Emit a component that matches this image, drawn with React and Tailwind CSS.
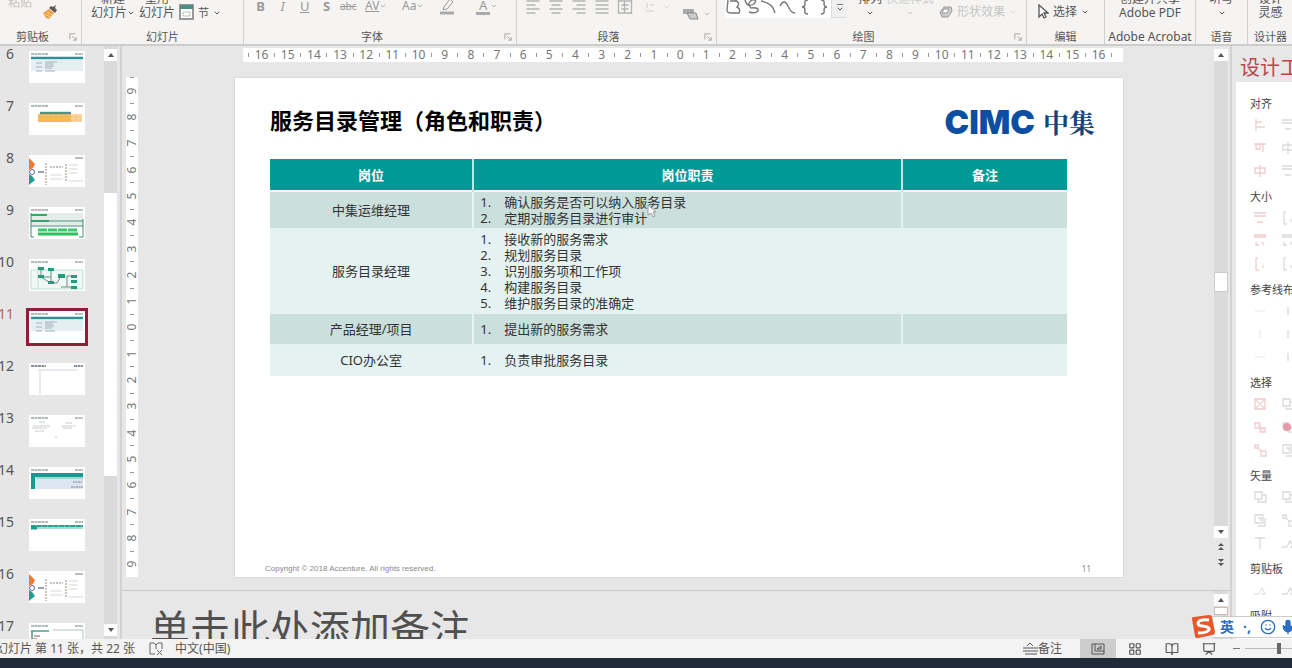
import React from "react";
import { BookOpen, ChevronDown, Mic, Presentation, Smile, LayoutGrid } from "lucide-react";

/* ---------- Ribbon ---------- */

function Group({ label, labelSize = "text-[11px]", className, launcher, children }) {
  return (
    <section className={`flex h-[44px] flex-col justify-end border-r border-[#cfcfcf] ${className}`}>
      <div className="flex h-5 items-end">{children}</div>
      <div className="mt-[10px] flex h-[14px] items-center">
        <h2 className={`flex-1 text-center leading-[14px] whitespace-nowrap text-[#555] ${labelSize}`}>{label}</h2>
        {launcher && (
          <button aria-label={`${label} 选项`} className="flex w-4 justify-center text-[#999]">
            <svg viewBox="0 0 10 10" className="size-2" fill="none" stroke="currentColor">
              <path d="M1 8V1h7M4 4l5 5M9 5v4H5" />
            </svg>
          </button>
        )}
      </div>
    </section>
  );
}

function Stack({ top, bottom, arrow, className = "" }) {
  return (
    <button className={`flex flex-col items-center text-[12px] leading-[14px] whitespace-nowrap ${className}`}>
      <span>{top}</span>
      <span className="flex h-[14px] items-center">
        {bottom}
        {arrow && <ChevronDown className="size-2" strokeWidth={3} />}
      </span>
    </button>
  );
}

const ALIGNMENTS = [
  { name: "左对齐", d: "M1 2h13M1 6h9M1 10h13M1 14h9" },
  { name: "居中", d: "M1 2h13M3 6h9M1 10h13M3 14h9" },
  { name: "右对齐", d: "M1 2h13M5 6h9M1 10h13M5 14h9" },
  { name: "两端对齐", d: "M1 2h13M1 6h13M1 10h13M1 14h13" },
  { name: "分散对齐", d: "M1 1v14M14 1v14M1 2h13M4 6h7M4 10h7M1 14h13M7 2v12" },
];

function Ribbon() {
  return (
    <header className="flex h-[46px] shrink-0 overflow-hidden border-b-2 border-[#cdcdcb] bg-[#f5f4f2] text-[#555]">
      <Group label="剪贴板" launcher className="w-[82px] shrink-0">
        <button className="ml-2 self-start text-[12px] leading-[6px] text-[#c8c4c0]">粘贴</button>
        <button aria-label="格式刷" className="ml-[10px]">
          <svg viewBox="0 0 16 16" className="size-4">
            <path d="M1 9l6-4 5 4-5 6-3-1z" fill="#eea045" />
            <path d="M3 10l5 3M5 8l5 3" stroke="#fbd9a2" />
            <path d="M7 4l6 5 2-3-2-2 1-3-3 2-2-1z" fill="#5c5a58" />
          </svg>
        </button>
      </Group>
      <Group label="幻灯片" className="w-[162px] shrink-0">
        <Stack top="新建" bottom="幻灯片" arrow className="ml-[9px]" />
        <Stack top="重用" bottom="幻灯片" className="ml-1" />
        <button aria-label="版式" className="ml-1">
          <svg viewBox="0 0 15 16" className="h-4 w-[15px]">
            <path d="M1 1h13v14H1z" fill="#fff" stroke="#999" strokeWidth="2" />
            <path d="M1 1h13v4H1z" fill="#4b8f84" />
            <path d="M4 8h7v4H4z" fill="none" stroke="#bbb" />
          </svg>
        </button>
        <button className="ml-1 flex h-[14px] items-center gap-1 text-[11px]">
          节<ChevronDown className="size-2" strokeWidth={3} />
        </button>
      </Group>
      <Group label="字体" launcher className="w-[273px] shrink-0">
        <div className="ml-3 flex items-center gap-[13px] pb-[5px] text-[13px] leading-[18px] text-[#999]">
          <button className="w-[9px] font-bold">B</button>
          <button className="w-[9px] italic">I</button>
          <button className="w-[9px] underline">U</button>
          <button className="w-[9px] font-bold">S</button>
          <button className="-ml-1 w-4 text-[10px] line-through">abc</button>
          <button className="-ml-1 flex w-6 items-center text-[12px] underline">AV<ChevronDown className="size-2 shrink-0" /></button>
          <button className="flex w-6 items-center text-[12px]">Aa<ChevronDown className="size-2 shrink-0" /></button>
          <button aria-label="突出显示" className="w-6">
            <svg viewBox="0 0 16 18" className="h-[18px] w-4" fill="none" stroke="#999">
              <path d="M5 10l6-8 3 3-6 7-4 1z" />
              <path d="M1 16h14" stroke="#aaa" strokeWidth="3" />
            </svg>
          </button>
          <button aria-label="字体颜色" className="flex w-6 items-center">
            <span className="border-b-3 border-[#aaa] px-[3px] leading-[14px]">A</span>
            <ChevronDown className="size-2" />
          </button>
        </div>
      </Group>
      <Group label="段落" launcher className="w-[200px] shrink-0">
        <div className="ml-2 flex items-center gap-[7px] pb-[5px]">
          {ALIGNMENTS.map((a) => (
            <button key={a.name} aria-label={a.name}>
              <svg viewBox="0 0 15 16" className="size-4" fill="none" stroke="#b4b4b4" strokeWidth="1.3">
                <path d={a.d} />
              </svg>
            </button>
          ))}
          <button aria-label="行距" className="ml-[5px] flex items-center gap-2 text-[#ccc]">
            <svg viewBox="0 0 10 10" className="size-[10px]" fill="none" stroke="currentColor">
              <path d="M2 1v5M5 3h4M1 9h8" />
            </svg>
            <ChevronDown className="size-2" />
          </button>
        </div>
        <button aria-label="转换为 SmartArt" className="ml-3 flex items-center gap-1 text-[#999]">
          <svg viewBox="0 0 16 12" className="h-3 w-4">
            <path d="M0 1h11v5H0z" fill="#aaa" />
            <path d="M4 5h9l2 6H7z" fill="#ccc" stroke="#888" />
          </svg>
          <ChevronDown className="size-2" />
        </button>
      </Group>
      <Group label="绘图" launcher className="min-w-[310px] flex-1">
        <button aria-label="形状" className="mb-[2px] ml-2 flex h-[18px] w-[122px] items-center bg-white">
          <svg viewBox="0 0 106 18" className="h-[18px] w-[106px]" fill="none" stroke="#777" strokeWidth="1.4">
            <path d="M3 0l-1 10q0 3 4 3h8q2-4-2-6 4-4-2-7M5 1h7" />
            <path d="M20 0q2 8 9 4 4-5-2-4-6 4-1 8 8-1 7 3-3 3-9 1" />
            <path d="M36 1q12 2 14 12M55 6q4-8 8 0 3 7 7 7M83 0q-4 0-3 4 0 3-3 3 3 0 3 3-1 4 3 4M96 0q4 0 3 4 0 3 3 3-3 0-3 3 1 4-3 4" />
          </svg>
          <span className="flex h-[18px] flex-1 flex-col items-center justify-center border-b border-l border-[#ddd] bg-[#f0f0f0]">
            <span className="h-px w-[6px] bg-[#777]" />
            <ChevronDown className="size-2" strokeWidth={3} />
          </span>
        </button>
        <Stack top="排列" arrow className="ml-[11px]" />
        <Stack top="快速样式" arrow className="ml-1 text-[#ccc]" />
        <button className="ml-[5px] flex items-center gap-1 text-[12px] leading-4 whitespace-nowrap text-[#c4c4c4]">
          <svg viewBox="0 0 14 12" className="h-3 w-[14px]">
            <path d="M5 1h7l1 4-4 6H3L1 6z" fill="#ccc" stroke="#999" />
            <path d="M5 3h5l-2 4H3z" fill="#fff" stroke="#999" />
          </svg>
          形状效果<ChevronDown className="size-2" />
        </button>
      </Group>
      <Group label="编辑" className="w-[78px] shrink-0">
        <button className="ml-[10px] flex items-center gap-1 text-[12px] leading-4 whitespace-nowrap">
          <svg viewBox="0 0 12 16" className="h-4 w-3" fill="#fff" stroke="#555" strokeWidth="1.3">
            <path d="M2 1v12l3-3 2 4 2-1-2-4h4z" />
          </svg>
          选择<ChevronDown className="size-2" strokeWidth={3} />
        </button>
      </Group>
      <Group label="Adobe Acrobat" labelSize="text-[12px]" className="w-[91px] shrink-0">
        <Stack top="创建并共享" bottom="Adobe PDF" className="flex-1" />
      </Group>
      <Group label="语音" className="w-[52px] shrink-0">
        <Stack top="听写" arrow className="flex-1" />
      </Group>
      <Group label="设计器" className="w-[45px] shrink-0 border-r-0">
        <Stack top="设计" bottom="灵感" className="flex-1" />
      </Group>
    </header>
  );
}

/* ---------- Slide thumbnails ---------- */

const MARKS = <path d="M2 3h17M46 3h8" stroke="#9aa4a4" strokeWidth="1.4" strokeDasharray="3 .5" />;

const ROWS_ART = (
  <g>
    {MARKS}
    <path d="M2 9h52v11H2z" fill="#e4eef3" />
    <path d="M2 7h52" stroke="#2f8f92" strokeWidth="2.6" />
    <path d="M7 12h6M16 11h12M16 13h8M7 16h6M16 15h9M16 17h7M7 20h6M16 20h10" stroke="#a3b0b9" />
  </g>
);

const FAN_ART = (
  <g>
    <path d="M46 3h8" stroke="#9aa4a4" strokeWidth="1.4" />
    <path d="M0 3l6 6-2 4-4 2z" fill="#ee7a2c" />
    <path d="M0 19l3 2 3 4-6 5z" fill="#1f9c8e" />
    <circle cx="3" cy="17" r="2.5" fill="#fff" stroke="#5d6aa5" />
    <path d="M9 17h6" stroke="#7d8a99" strokeWidth="1.6" />
    <path d="M17 8v22M37 9v18" stroke="#a08a7a" strokeDasharray="2 1" />
    <path d="M21 20h12M21 24h13M40 10h9M40 14h9M40 18h8M40 26h14" stroke="#d3dad8" />
    <path d="M21 12h13" stroke="#888" strokeDasharray="2 1" />
  </g>
);

const SLIDES = [
  { n: 6, art: ROWS_ART },
  {
    n: 7,
    art: (
      <g>
        {MARKS}
        <path d="M9 11h44v8H9z" fill="#fbbd5c" />
        <path d="M42 11h11v8H42z" fill="#fdd6a0" />
        <path d="M11 10h31" stroke="#3c9a86" strokeWidth="2.4" />
        <path d="M10 14h42M10 17h42" stroke="#e3a54a" strokeDasharray="4 1" strokeWidth=".6" />
      </g>
    ),
  },
  { n: 8, art: FAN_ART },
  {
    n: 9,
    art: (
      <g>
        {MARKS}
        <path d="M2 6h52v13H2z" fill="#e3ece9" />
        <path d="M2 8h16M2 14h18" stroke="#2fae63" strokeWidth="2" />
        <path d="M2 14h52M2 19h52" stroke="#4a8f80" />
        <path d="M9 23h39" stroke="#39c86b" strokeWidth="3" strokeDasharray="9 1" />
        <path d="M9 27h40" stroke="#2fbf5c" strokeWidth="3" />
        <path d="M2 6v24h3M54 12v18h-4" fill="none" stroke="#3f8d6a" />
      </g>
    ),
  },
  {
    n: 10,
    art: (
      <g>
        {MARKS}
        <path d="M2 11h52v19H2zM9 6v24" fill="#f0f8f5" stroke="#bfe0d5" />
        <path d="M12 9v9h10M22 9v15h6l4-7M38 28V17h6M32 28h14M12 18l8 5" fill="none" stroke="#6d8f86" />
        <path d="M9 8h6v3H9zM19 9h6v3h-6zM9 16h6v3H9zM19 22h6v3h-6zM29 15h7v4h-7zM42 16h6v3h-6zM42 21h6v3h-6zM42 27h6v3h-6z" fill="#259a7c" />
      </g>
    ),
  },
  { n: 11, art: ROWS_ART, selected: true },
  {
    n: 12,
    art: (
      <g>
        <path d="M2 3h15M45 3h9" stroke="#66707a" strokeWidth="1.6" strokeDasharray="3 .5" />
        <path d="M9 7h39M11 7v25" fill="none" stroke="#e6e9f2" strokeWidth="2" />
      </g>
    ),
  },
  {
    n: 13,
    art: (
      <g>
        {MARKS}
        <path d="M10 7h6M4 11h17M3 13h15M6 16h9M37 8h6M33 11h14M34 13h9M26 22h2" stroke="#c2c6c8" strokeDasharray="3 .5" />
      </g>
    ),
  },
  {
    n: 14,
    art: (
      <g>
        {MARKS}
        <path d="M2 6h52v16H2z" fill="#dde6ee" />
        <path d="M2 8h52M4 8v14" stroke="#179b90" strokeWidth="4" />
        <path d="M7 11h47" stroke="#9acfc8" strokeWidth="1.4" />
        <path d="M44 15h9M42 20h12" stroke="#7d8894" strokeDasharray="2 .5" />
      </g>
    ),
  },
  {
    n: 15,
    art: (
      <g>
        {MARKS}
        <path d="M2 6h52v4H2z" fill="#a9d8d3" />
        <path d="M2 7h52" stroke="#2a9d94" strokeWidth="2" strokeDasharray="5 .6" />
        <path d="M2 9h6" stroke="#179b90" strokeWidth="3" />
      </g>
    ),
  },
  { n: 16, art: FAN_ART },
  {
    n: 17,
    art: (
      <g>
        {MARKS}
        <path d="M2 8h18M3 8v20" fill="none" stroke="#4e9f8b" strokeWidth="1.6" />
        <path d="M5 13h6M3 16h5" stroke="#a0504c" />
        <path d="M24 7h30v20" fill="none" stroke="#b4c4c0" />
      </g>
    ),
  },
];

function ScrollButton({ down }) {
  return (
    <button aria-label={down ? "向下滚动" : "向上滚动"} className="flex h-3 w-full shrink-0 items-center justify-center bg-white">
      <svg viewBox="0 0 8 4" className="h-1 w-2" fill="#555">
        <path d={down ? "M1 0h6L4 4z" : "M1 4h6L4 0z"} />
      </svg>
    </button>
  );
}

function Thumbnails() {
  return (
    <aside className="flex w-[122px] shrink-0 overflow-hidden border-r-2 border-[#d2d2d2] bg-[#e7e6e7]">
      <ol className="flex-1 pt-[5px]">
        {SLIDES.map((s) => (
          <li key={s.n} className="flex h-[52px] items-start gap-3">
            <span className={`flex w-[14px] justify-end text-[14px] leading-[6px] ${s.selected ? "text-[#c0566a]" : "text-[#555]"}`}>{s.n}</span>
            <button
              aria-label={`幻灯片 ${s.n}`}
              className={`-mt-[3px] border-3 ${s.selected ? "border-[#8d1f38]" : "border-transparent"}`}
            >
              <svg viewBox="0 0 56 32" className="h-8 w-14 bg-white">{s.art}</svg>
            </button>
          </li>
        ))}
      </ol>
      <div className="mr-[3px] flex w-[13px] flex-col bg-[#dadada] py-[3px]">
        <ScrollButton />
        <div className="grow-[132]" />
        <div className="grow-[283] bg-white" />
        <div className="grow-[148]" />
        <ScrollButton down />
      </div>
    </aside>
  );
}

/* ---------- Rulers ---------- */

const range = (max) => Array.from({ length: max * 2 + 1 }, (_, i) => Math.abs(i - max));

function HorizontalRuler() {
  return (
    <div className="ml-2 flex h-[14px] items-center justify-between bg-white pr-[11px] pl-[5px] text-[12px] text-[#777]">
      {range(16).map((n, i) => (
        <React.Fragment key={i}>
          <span className="h-1 w-px bg-[#999]" />
          <span className="w-0 flex-1 text-center leading-[14px]">{n}</span>
        </React.Fragment>
      ))}
      <span className="h-1 w-px bg-[#999]" />
    </div>
  );
}

function VerticalRuler() {
  return (
    <div className="flex w-3 flex-1 flex-col items-center bg-white text-[12px] text-[#777]">
      {range(9).map((n, i) => (
        <React.Fragment key={i}>
          <span className="h-px w-1 bg-[#999]" />
          <span className="flex h-0 flex-1 items-center">
            <span className="-rotate-90 leading-3">{n}</span>
          </span>
        </React.Fragment>
      ))}
    </div>
  );
}

/* ---------- Slide ---------- */

const ROLES = [
  { role: "中集运维经理", height: "h-[37px]", duties: ["确认服务是否可以纳入服务目录", "定期对服务目录进行审计"], pointer: true },
  { role: "服务目录经理", height: "h-[86px]", duties: ["接收新的服务需求", "规划服务目录", "识别服务项和工作项", "构建服务目录", "维护服务目录的准确定"] },
  { role: "产品经理/项目", height: "h-[30px]", duties: ["提出新的服务需求"] },
  { role: "CIO办公室", height: "h-[32px]", duties: ["负责审批服务目录"] },
];

function Pointer() {
  return (
    <svg viewBox="0 0 10 14" className="absolute top-[-6px] left-full h-[14px] w-[10px]" fill="#fff" stroke="#999">
      <path d="M1 1v10l3-2 2 4 2-1-2-4h3z" />
    </svg>
  );
}

function Slide() {
  return (
    <article className="flex min-h-0 flex-1 flex-col bg-white pr-14 pl-[35px] shadow-[0_0_2px_#c4c4c4]">
      <div className="mt-6 -mr-7 flex h-10 items-center justify-between">
        <h1 className="pb-1 text-[22px] leading-9 font-bold text-black">服务目录管理（角色和职责）</h1>
        <div className="flex items-center gap-2 leading-10 text-[#0b4ea2]">
          <span className="font-['Inter'] text-[33px] font-black">CIMC</span>
          <span className="font-['Noto_Serif_CJK_SC','Noto_Sans_CJK_SC',serif] text-[26px] font-bold text-[#12447f]">中集</span>
        </div>
      </div>
      <table className="mt-[17px] w-full table-fixed border-collapse text-[13px] leading-4 text-[#333]">
        <colgroup>
          <col className="w-[25.5%]" />
          <col className="w-[53.8%]" />
          <col />
        </colgroup>
        <thead>
          <tr className="h-8 border-b-2 border-[#eef8f7] bg-[#009a96] text-white">
            <th className="border-r-2 border-[#bfe6e4]">岗位</th>
            <th className="border-r-2 border-[#bfe6e4]">岗位职责</th>
            <th>备注</th>
          </tr>
        </thead>
        <tbody>
          {ROLES.map((r, i) => (
            <tr key={r.role} className={`${r.height} ${i % 2 ? "bg-[#e5f2f2]" : "bg-[#cbdfdc]"}`}>
              <td className="border-r-2 border-[#e5f2f2] text-center">{r.role}</td>
              <td className="border-r-2 border-[#e5f2f2] pl-[6px]">
                <ol>
                  {r.duties.map((d, j) => (
                    <li key={d} className="flex">
                      <span className="w-6">{j + 1}.</span>
                      <span className="relative">{d}{r.pointer && j === 1 && <Pointer />}</span>
                    </li>
                  ))}
                </ol>
              </td>
              <td />
            </tr>
          ))}
        </tbody>
      </table>
      <footer className="mt-auto flex justify-between pb-[2px] text-[8px] leading-3 text-[#888]">
        <span className="-ml-[5px] font-['Liberation_Sans',sans-serif]">Copyright © 2018 Accenture. All rights reserved.</span>
        <span className="-mr-6">11</span>
      </footer>
    </article>
  );
}

function Editor() {
  return (
    <main className="flex min-w-0 flex-1 flex-col bg-[#e7e7e7]">
      <div className="flex min-h-0 flex-1">
        <div className="ml-1 flex w-3 flex-col pt-[31px] pb-[13px]">
          <VerticalRuler />
        </div>
        <div className="flex min-w-0 flex-1 flex-col pt-[2px] pr-[91px] pb-[13px] pl-[97px]">
          <HorizontalRuler />
          <div className="h-4" />
          <Slide />
        </div>
        <div className="mr-[2px] flex w-[14px] flex-col py-[3px]">
          <div className="flex flex-1 flex-col bg-[#dadada]">
            <ScrollButton />
            <div className="grow-[211]" />
            <div className="h-5 border border-[#ccc] bg-white" />
            <div className="grow-[234]" />
            <ScrollButton down />
          </div>
          <div className="flex h-[49px] flex-col items-center gap-[7px] pt-1 text-[#555]">
            <button aria-label="上一张幻灯片">
              <svg viewBox="0 0 8 9" className="h-[9px] w-2" fill="currentColor"><path d="M1 4h6L4 1zM1 8h6L4 5z" /></svg>
            </button>
            <button aria-label="下一张幻灯片">
              <svg viewBox="0 0 8 9" className="h-[9px] w-2" fill="currentColor"><path d="M1 1h6L4 4zM1 5h6L4 8z" /></svg>
            </button>
          </div>
        </div>
      </div>
      <div className="flex h-[49px] shrink-0 overflow-hidden border-t border-[#c8c8c8]">
        <textarea
          aria-label="备注"
          defaultValue="单击此处添加备注"
          className="mt-3 h-14 flex-1 resize-none overflow-hidden bg-transparent pl-7 text-[40px] leading-[52px] text-[#505050] outline-none"
        />
        <div className="mr-[2px] w-[14px] bg-[#dadada] pt-[3px]">
          <ScrollButton />
          <div className="mt-px h-2 border border-[#d8b9b5] bg-white" />
        </div>
      </div>
    </main>
  );
}

/* ---------- Design pane ---------- */

const PINK = "#f1cdd0";
const GREY = "#dadada";

const GLYPHS = {
  left: "M3 1v12M3 4h6M3 9h9",
  center: "M1 3h12M3 3v5h4V3M10 3v8",
  middle: "M7 1v12M2 4h10v5H2z",
  bars: "M1 2h12M1 5h12M4 11h6",
  width: "M1 1h12M1 3h12M3 8v3h3M9 8l2 3",
  height: "M3 1v12M3 1h2M3 13h3M10 8v3",
  line: "M2 7h10",
  vline: "M7 3v8",
  box: "M2 2h10v10H2zM2 2l10 10M12 2L2 12",
  dot: "M2 3h5v5H2zM7 8h5v4H7zM5 5l5 5",
  link: "M2 2h3v3H2zM5 5l4 4M8 8h5v5H8z",
  union: "M2 2h7v7H2zM5 9v3h8V5H9",
  frag: "M2 2h8v8H2zM5 5h3v3M12 5v8H5",
  text: "M2 2h10M7 2v11",
  clip: "M1 11h5M6 11l3-6 3 6H9",
};

const PANE = [
  { title: "对齐", color: PINK, rows: [["left", "bars"], ["center", "middle"], ["middle", "bars"]] },
  { title: "大小", color: PINK, rows: [["bars", "height"], ["width", "width"], ["height", "height"]] },
  { title: "参考线布局", color: "#ececec", rows: [["line", "vline"], ["vline", "vline"], ["line", "vline"]] },
  { title: "选择", color: PINK, rows: [["box", "union"], ["dot", "dot"], ["link", "frag"]] },
  { title: "矢量", color: GREY, rows: [["union", "union"], ["frag", "link"], ["text", "clip"]] },
  { title: "剪贴板", color: "#e4e4e4", rows: [["clip", "clip"]], short: true },
  { title: "吸附", color: GREY, rows: [] },
];

function DesignPane() {
  return (
    <aside className="flex w-[62px] shrink-0 flex-col overflow-hidden border-l-2 border-[#d2d2d2] bg-[#e7e7e7]">
      <h2 className="h-9 pt-[2px] pl-2 text-[20px] leading-10 whitespace-nowrap text-[#b7474a]">设计工具</h2>
      <div className="ml-1 h-0 flex-1 bg-white pt-[14px] pl-[14px]">
        {PANE.map((s) => (
          <section key={s.title} className={s.short ? "h-[47px]" : "h-[93px]"}>
            <h3 className="mb-px text-[11px] leading-4 whitespace-nowrap text-[#444]">{s.title}</h3>
            {s.rows.map((row, i) => (
              <div key={i} className="flex h-[23px] items-center gap-[14px] pl-[3px]">
                {row.map((g, j) => (
                  <button key={j} aria-label={`${s.title} ${i * 2 + j + 1}`} className="shrink-0">
                    <svg viewBox="0 0 14 14" className="size-[14px]" fill="none" stroke={j ? GREY : s.color} strokeWidth="1.3">
                      <path d={GLYPHS[g]} />
                      {s.title === "选择" && i === 1 && j === 1 && <circle cx="6" cy="7" r="4" fill="#e79aa5" stroke="none" />}
                    </svg>
                  </button>
                ))}
              </div>
            ))}
          </section>
        ))}
      </div>
    </aside>
  );
}

/* ---------- Status bar and input method ---------- */

function StatusBar() {
  return (
    <footer className="flex h-[19px] shrink-0 items-center overflow-hidden bg-[#f3f3f3] text-[12px] leading-[19px] whitespace-nowrap text-[#555]">
      <span className="-ml-1">幻灯片 第 11 张，共 22 张</span>
      <button aria-label="拼写检查" className="ml-[14px]">
        <svg viewBox="0 0 14 14" className="size-[14px]" fill="none" stroke="#666">
          <path d="M6 12H1V1h4l2 2 2-2h4v6M7 3v4M8 8l5 5M13 8l-5 5" />
        </svg>
      </button>
      <button className="ml-3">中文(中国)</button>
      <button className="ml-auto flex items-center">
        <svg viewBox="0 0 15 14" className="h-[14px] w-[15px]" fill="none" stroke="#555">
          <path d="M4 4l3-3 3 3M0 6h15M0 9h15M2 12h12" />
        </svg>
        备注
      </button>
      <button aria-label="普通视图" className="ml-[18px] flex h-[19px] w-9 items-center justify-center bg-[#cdcdcd]">
        <svg viewBox="0 0 14 12" className="h-3 w-[14px]" fill="none" stroke="#555"><path d="M1 1h12v10H1zM4 1v7M4 8h9M6 6l4-3v3z" /></svg>
      </button>
      <button aria-label="幻灯片浏览" className="ml-3"><LayoutGrid className="size-[14px]" /></button>
      <button aria-label="阅读视图" className="ml-[23px]"><BookOpen className="size-[14px]" /></button>
      <button aria-label="幻灯片放映" className="ml-[23px]"><Presentation className="size-[14px]" /></button>
      <button aria-label="缩小" className="ml-[17px] h-px w-[7px] bg-[#777]" />
      <div className="ml-[5px] w-[47px] overflow-hidden">
        <input
          type="range"
          aria-label="缩放"
          defaultValue="39"
          className="block h-[19px] w-[86px] appearance-none bg-transparent [&::-webkit-slider-runnable-track]:h-px [&::-webkit-slider-runnable-track]:bg-[#bbb] [&::-webkit-slider-thumb]:-mt-[5px] [&::-webkit-slider-thumb]:h-[11px] [&::-webkit-slider-thumb]:w-1 [&::-webkit-slider-thumb]:appearance-none [&::-webkit-slider-thumb]:bg-[#666]"
        />
      </div>
    </footer>
  );
}

function InputMethodBar() {
  return (
    <div className="absolute right-0 bottom-[29px] flex h-[25px] w-[102px] items-center overflow-hidden">
      <svg viewBox="0 0 26 25" className="relative h-[25px] w-[26px] shrink-0">
        <path d="M2 5Q1 3 4 3L19 1q3 0 3 2l3 15q0 3-3 3L8 24q-3 0-3-2z" fill="#e8562a" />
        <path d="M19 6Q9 5 8 9q0 3 5 3 7 1 6 4-2 3-11 3" fill="none" stroke="#fff" strokeWidth="3" />
      </svg>
      <div className="-ml-1 flex h-[22px] flex-1 items-center gap-2 border-y border-[#ccc] bg-white pl-2 text-[#2a6fc4]">
        <button className="text-[14px] leading-5 font-bold">英</button>
        <button aria-label="标点" className="w-[10px] text-[14px] leading-5 font-bold">·,</button>
        <button aria-label="表情"><Smile className="size-4" /></button>
        <button aria-label="语音输入" className="-ml-1 shrink-0"><Mic className="size-4" fill="currentColor" /></button>
      </div>
    </div>
  );
}

export default function App() {
  return (
    <div className="relative flex h-screen flex-col overflow-hidden bg-[#e7e7e7] font-['Noto_Sans','Noto_Sans_CJK_SC',sans-serif]">
      <Ribbon />
      <div className="flex min-h-0 flex-1">
        <Thumbnails />
        <Editor />
        <DesignPane />
      </div>
      <StatusBar />
      <div className="h-[10px] shrink-0 bg-[#1f2b38]" />
      <InputMethodBar />
    </div>
  );
}
